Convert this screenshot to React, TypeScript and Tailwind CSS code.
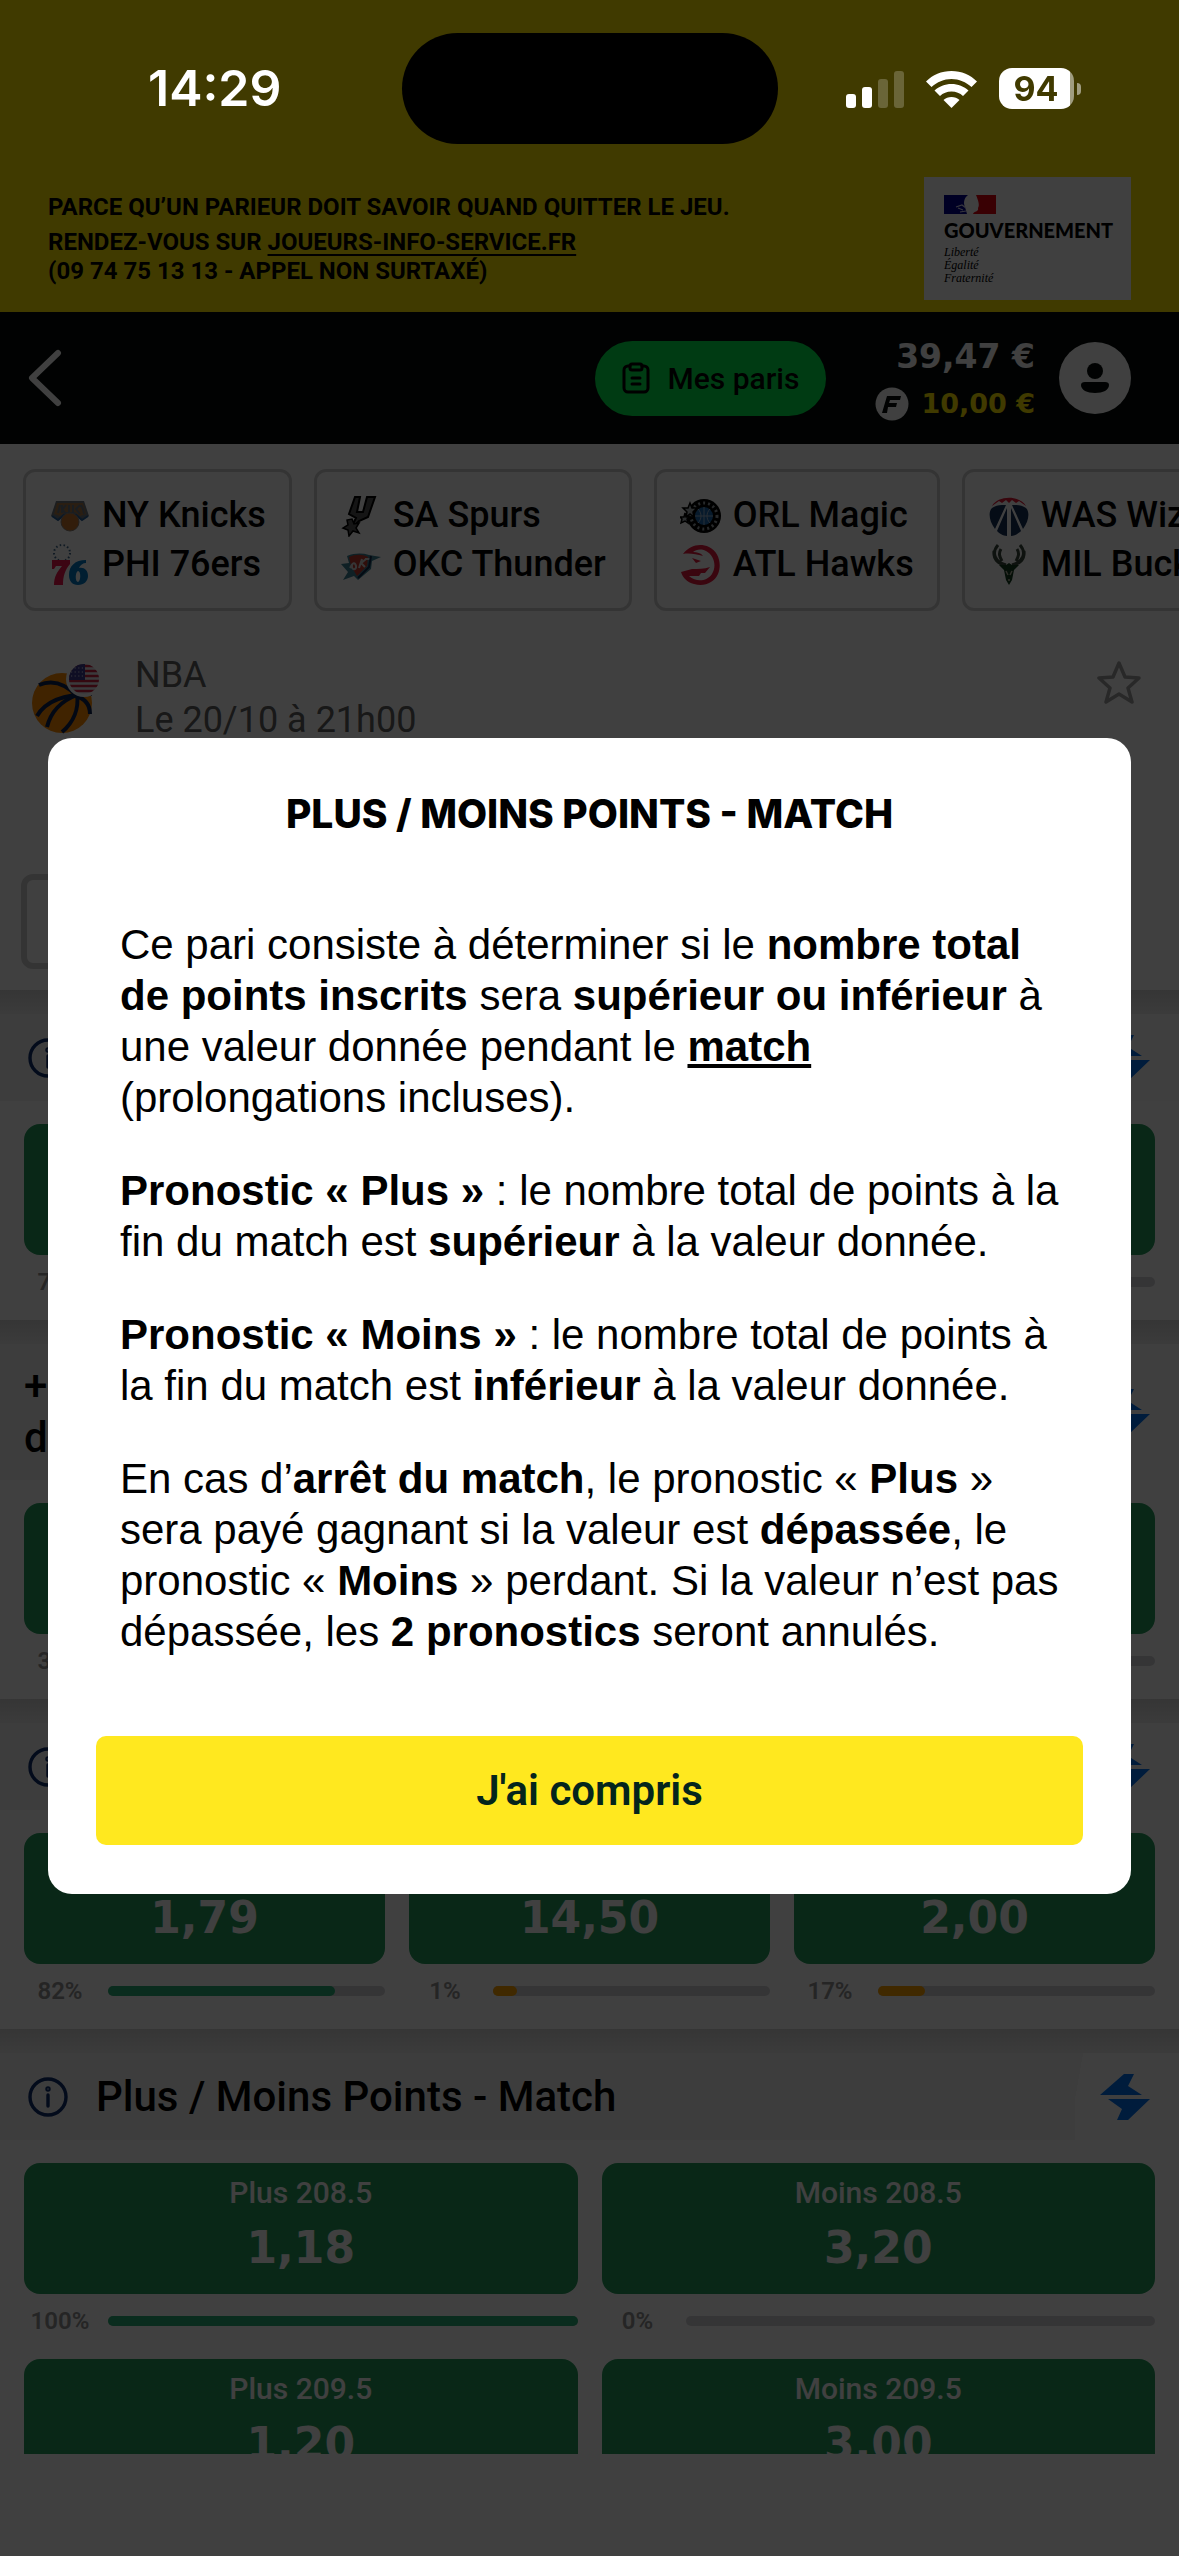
import React, { useState } from 'react';

// --- Types ---
interface Odd {
    label: string;
    value: string;
    percent: number;
}

interface Game {
    home: string;
    away: string;
    homeLogo: React.ReactNode;
    awayLogo: React.ReactNode;
}

// --- Team logos ---
const KnicksLogo = () => (
    <svg viewBox="0 0 42 42" className="size-[42px] shrink-0">
        <path d="M7 6h28l5 15-8 4-5-5H15l-5 5-8-4z" fill="#6f7780" />
        <path d="M8 8h26l3 11-6 2-5-4H16l-5 4-6-2z" fill="#a87848" />
        <path d="M9 18l2-8m2 8V10m0 5l4-5m-4 4l4 5m3 0v-9m4 9v-9m7 0l-4 4 4 5m4 0l-1-5 -2-4" stroke="#6a7380" strokeWidth="2" fill="none" />
        <path d="M3 21l6 4 6-5h12l6 5 6-4" stroke="#2a6098" strokeWidth="2" fill="none" />
        <circle cx="21" cy="27" r="9" fill="#c8742c" stroke="#8a8078" strokeWidth="1" />
    </svg>
);

const SixersLogo = () => (
    <svg viewBox="0 0 42 42" className="size-[42px] shrink-0">
        <circle cx="13" cy="9" r="8" fill="none" stroke="#40688c" strokeWidth="2" strokeDasharray="1.5 2.4" />
        <path d="M3 16h18v4c-5 6-7 12-7 21H5c0-8 3-13 8-19H7l-2 3H3z" fill="#ed174c" />
        <path d="M37 16c-11 0-17 6-17 15 0 6 3 10 9 10s10-4 10-9c0-6-4-9-9-8 1-3 4-5 7-5zM29 27c3 0 3 10 0 11-3 0-3-10 0-11z" fill="#0079c4" fillRule="evenodd" />
    </svg>
);

const SpursLogo = () => (
    <svg viewBox="0 0 42 42" className="size-[42px] shrink-0">
        <path d="M15 2l5 0-3 15 6 0 4-15 8 0-7 20-9 4-4 4-2-1 3-6-7-4z" fill="#555" stroke="#000" strokeWidth="2" />
        <path d="M12 24l2 5 5-1-3 5 3 5-6-2-4 5-1-6-5-2 5-3-1-5z" fill="#555" stroke="#000" strokeWidth="1.5" />
    </svg>
);

const ThunderLogo = () => (
    <svg viewBox="0 0 42 42" className="size-[42px] shrink-0">
        <path d="M1 20l8-1-2-7c8-3 15-3 22-1l12 2-9 4-1 8-13 11-4-4-11 4 5-8z" fill="#3c7f92" />
        <path d="M9 13c7-3 13-3 19 0l-1 9-10 10-6-10z" fill="#c03a2c" />
        <path d="M10 24c3-6 5-6 6-2s-5 5-4-1m7 3l3-9m-2 5l6-5m-5 4l4 4m0-8h6" stroke="#d8d8d8" strokeWidth="2" fill="none" />
        <path d="M31 12l-2 11-11 11" stroke="#12294c" strokeWidth="2" fill="none" />
    </svg>
);

const MagicLogo = () => (
    <svg viewBox="0 0 42 42" className="size-[42px] shrink-0">
        <circle cx="24" cy="21" r="17" fill="#000" />
        <circle cx="24" cy="21" r="13" fill="none" stroke="#9aa2a8" strokeWidth="3" strokeDasharray="2 3" />
        <circle cx="24" cy="21" r="9" fill="#1d6ab0" />
        <path d="M15 21h18M24 12v18M18 14c4 4 4 10 0 14M30 14c-4 4-4 10 0 14" stroke="#a0b4cc" strokeWidth="1" fill="none" />
        <path d="M10 8l2 5 5 0-4 4 1 5-4-3-4 3 1-5-4-4h5z" fill="#aab2b8" stroke="#000" strokeWidth="1.5" />
        <path d="M5 18l1 4h4l-3 2 1 4-3-2-4 2 1-4-2-2h4z" fill="#aab2b8" stroke="#000" strokeWidth="1.5" />
    </svg>
);

const HawksLogo = () => (
    <svg viewBox="0 0 42 42" className="size-[42px] shrink-0">
        <path
            d="M3 10C10 1 20-1 29 3c10 5 13 17 9 27C34 39 24 43 14 40 7 38 3 34 1 28l11-3c6 0 12 0 18-2l-5 6-4 0-2 3-10 0c8 7 18 5 23-2 5-8 2-19-6-23-6-3-10-1-13 1 4 0 8 1 10 4C16 10 9 9 3 10z"
            fill="#e8193c"
        />
        <path d="M12 14l9 3-5 2z" fill="#e8193c" />
    </svg>
);

const WizardsLogo = () => (
    <svg viewBox="0 0 42 42" className="size-[42px] shrink-0">
        <path d="M4 11C10 0 32 0 38 11l-7-5-3 2-4-3-3 3-3-3-4 3-3-2z" fill="#e31837" />
        <path d="M14 10l4 0-11 24C1 26 0 17 4 13c3-2 6-3 10-3zM28 10l-4 0 11 24c6-8 7-17 3-21-3-2-6-3-10-3z" fill="#143058" />
        <path d="M19 13v28c-4 0-8-3-10-5zM23 13v28c4 0 8-3 10-5z" fill="#143058" />
    </svg>
);

const BucksLogo = () => (
    <svg viewBox="0 0 42 42" className="size-[42px] shrink-0">
        <path d="M10 1C3 9 7 18 18 21M6 7c-1 8 4 13 12 14M13 5c-3 5-1 8 1 12M32 1c7 8 3 17-8 20M36 7c1 8-4 13-12 14M29 5c3 5 1 8-1 12" stroke="#3a4a3c" strokeWidth="3" fill="none" />
        <path d="M11 21l7 0 3-2 3 2 7 0-5 5-2 10-3 5-3-5-2-10z" fill="#123c1e" />
        <path d="M18 27l2 4m4-4l-2 4m-2 5h2" stroke="#b8b4a0" strokeWidth="1.5" />
    </svg>
);

// --- Icons ---
const BasketballIcon = () => (
    <svg viewBox="0 0 72 72" className="size-[72px] shrink-0">
        <circle cx="32" cy="41" r="30" fill="#ff8a00" />
        <g stroke="#0b2150" strokeWidth="4" fill="none">
            <path d="M9 23c14-6 27-1 39 12" />
            <path d="M7 54c8-14 24-22 55-22" />
            <path d="M17 65c4-16 14-26 30-32" />
            <path d="M32 70c12-10 17-24 15-38" />
            <path d="M46 34c10 3 14 10 14 18" />
        </g>
        <circle cx="54" cy="17" r="18" fill="#fff" />
        <clipPath id="flag">
            <circle cx="54" cy="17" r="15" />
        </clipPath>
        <g clipPath="url(#flag)">
            <rect x="39" y="2" width="30" height="30" fill="#e8e8f0" />
            <path d="M39 4h30M39 9h30M39 14h30M39 19h30M39 24h30M39 29h30" stroke="#d02040" strokeWidth="2.6" />
            <rect x="39" y="2" width="16" height="16" fill="#3c3b8e" />
            <path d="M41 6h13M41 10h13M41 14h13" stroke="#d8d8f0" strokeWidth="1.2" strokeDasharray="1.2 2.4" />
        </g>
    </svg>
);

const InfoIcon = () => (
    <svg viewBox="0 0 40 40" className="size-10 shrink-0" fill="none" stroke="#0c2c6c" strokeWidth="3.4">
        <circle cx="20" cy="20" r="18" />
        <path d="M20 18v11" strokeLinecap="round" />
        <circle cx="20" cy="12" r="1" />
    </svg>
);

const BoltIcon = () => (
    <svg viewBox="0 0 50 46" className="h-[46px] w-[50px]" fill="#0070f0">
        <path d="M24 0h10l-6 12 14 9H0z" />
        <path d="M8 25h42L28 46H17l5-11z" />
    </svg>
);

const StatusBar = () => (
    <div className="fixed inset-x-0 top-0 z-30 grid h-[177px] grid-cols-[1fr_376px_1fr] pt-[33px] text-white">
        <div className="flex h-[111px] items-center justify-center pl-7 font-[Inter] text-[50px] font-semibold">14:29</div>
        <div className="h-[111px] rounded-full bg-black" />
        <div className="flex h-[111px] items-center gap-[22px] pl-[68px]">
            <svg viewBox="0 0 58 38" className="h-[38px] w-[58px]" fill="#fff">
                <rect x="0" y="24" width="10" height="14" rx="3" />
                <rect x="16" y="17" width="10" height="21" rx="3" />
                <rect x="32" y="9" width="10" height="29" rx="3" opacity=".22" />
                <rect x="48" y="1" width="10" height="37" rx="3" opacity=".22" />
            </svg>
            <svg viewBox="0 0 51 38" className="h-[38px] w-[51px]" fill="#fff">
                <path d="M25.500 1C15.500 1 6.500 5 0 11.500l5.500 5.500C11 12 18 9 25.500 9S40 12 45.500 17l5.500-5.500C44.500 5 35.500 1 25.500 1z" />
                <path d="M25.500 14c-6.500 0-12.500 2.500-17 6.500l5.500 5.500c3-3 7-4.500 11.500-4.500S34 23 37 26l5.500-5.500c-4.500-4-10.500-6.500-17-6.500z" />
                <path d="M25.500 27c-3 0-6 1-8 3l8 8 8-8c-2-2-5-3-8-3z" />
            </svg>
            <div className="flex items-center gap-[3px]">
                <div className="flex h-[41px] w-[75px] items-center justify-center rounded-[13px] bg-[linear-gradient(90deg,#fff_94%,#a09d80_94%)] font-[Inter] text-[34px] font-bold text-[#403a00]">
                    94
                </div>
                <div className="h-3 w-1 rounded-r-full bg-[#a09d80]" />
            </div>
        </div>
    </div>
);

// --- Page parts ---
const GamblingBanner = () => (
    <div className="flex items-start justify-between bg-[#ffe600] px-12 pt-[177px] pb-3 text-black">
        <div className="pt-4 font-[Roboto] text-2xl leading-[29px] font-bold">
            <p className="mb-[6px]">PARCE QU’UN PARIEUR DOIT SAVOIR QUAND QUITTER LE JEU.</p>
            <p>
                RENDEZ-VOUS SUR{' '}
                <a href="#joueurs" className="underline underline-offset-4">JOUEURS-INFO-SERVICE.FR</a>
            </p>
            <p>(09 74 75 13 13 - APPEL NON SURTAXÉ)</p>
        </div>
        <div className="h-[123px] w-[207px] bg-white pt-[18px] pl-5">
            <svg viewBox="0 0 52 19" className="h-[19px] w-[52px]">
                <path d="M0 0h24c-4 3-5 8-3 12l2 7H0z" fill="#000091" />
                <path d="M32 0h20v19H29c1-3 6-2 5-6 2-3 0-8-2-13z" fill="#e1000f" />
                <path d="M12 12l6-2 4 3m-8 0l5 2m-3 2l6-1" stroke="#d8d8f0" strokeWidth="1.2" fill="none" />
            </svg>
            <p className="mt-1 font-[Lato] text-xl leading-6 font-black">GOUVERNEMENT</p>
            <p className="mt-1 font-['Liberation_Serif'] text-xs leading-[13px] italic">
                Liberté
                <br />
                Égalité
                <br />
                Fraternité
            </p>
        </div>
    </div>
);

const Header = () => (
    <header className="flex h-[132px] shrink-0 items-center bg-[#040a08] pr-12 pl-7">
        <button type="button" aria-label="Retour">
            <svg viewBox="0 0 34 58" className="h-[58px] w-[34px]" fill="none" stroke="#fff" strokeWidth="6" strokeLinecap="round" strokeLinejoin="round">
                <path d="M30 4L4 29l26 25" />
            </svg>
        </button>
        <button type="button" className="ml-auto flex h-[75px] w-[231px] items-center justify-center gap-[18px] rounded-full bg-[#00ec4c] font-[Roboto] text-[30px] font-medium text-black">
            <svg viewBox="0 0 28 32" className="h-8 w-7" fill="none" stroke="#000" strokeWidth="3" strokeLinecap="round" strokeLinejoin="round">
                <path d="M8 4H6a4 4 0 0 0-4 4v18a4 4 0 0 0 4 4h16a4 4 0 0 0 4-4V8a4 4 0 0 0-4-4h-2" />
                <rect x="8" y="2" width="12" height="6" rx="2" />
                <path d="M10 16h8M10 22h8" />
            </svg>
            Mes paris
        </button>
        <div className="ml-12 flex w-[161px] flex-col items-end gap-[5px] pt-1 font-['DejaVu_Sans'] font-bold whitespace-nowrap">
            <span className="text-[33px] leading-[42px] text-white">39,47 €</span>
            <span className="flex items-center gap-3 text-[27px] leading-[42px] text-[#ffe600]">
                <svg viewBox="0 0 34 34" className="size-[34px]">
                    <circle cx="17" cy="17" r="16.500" fill="#fff" />
                    <path d="M12 9h14l-1 4H15l-1 3h8l-1 4h-8l-1 6H7z" fill="#040a08" />
                </svg>
                10,00 €
            </span>
        </div>
        <button type="button" aria-label="Mon compte" className="ml-6 size-[72px] rounded-full bg-white">
            <svg viewBox="0 0 72 72" className="size-[72px]" fill="#040a08">
                <circle cx="36" cy="29" r="8" />
                <path d="M26 40h20q4 0 4 3c0 5-6 8-14 8s-14-3-14-8q0-3 4-3z" />
            </svg>
        </button>
    </header>
);

const GAMES: Game[] = [
    { home: 'NY Knicks', away: 'PHI 76ers', homeLogo: <KnicksLogo />, awayLogo: <SixersLogo /> },
    { home: 'SA Spurs', away: 'OKC Thunder', homeLogo: <SpursLogo />, awayLogo: <ThunderLogo /> },
    { home: 'ORL Magic', away: 'ATL Hawks', homeLogo: <MagicLogo />, awayLogo: <HawksLogo /> },
    { home: 'WAS Wizards', away: 'MIL Bucks', homeLogo: <WizardsLogo />, awayLogo: <BucksLogo /> },
];

const GameTabs = () => (
    <nav className="flex gap-[22px] overflow-hidden px-[23px] pt-[25px]">
        {GAMES.map(game => (
            <button
                key={game.home}
                type="button"
                className="flex h-[142px] shrink-0 flex-col justify-center rounded-xl border-3 border-[#cfcfcf] px-[23px] font-[Roboto] text-4xl leading-[49px] font-medium text-black"
            >
                <span className="flex items-center gap-[11px]">{game.homeLogo}{game.home}</span>
                <span className="flex items-center gap-[11px]">{game.awayLogo}{game.away}</span>
            </button>
        ))}
    </nav>
);

const EventCard = () => (
    <section className="pb-[21px]">
        <div className="flex pt-[42px] pr-[38px] pl-[30px]">
            <div className="pt-[9px]">
                <BasketballIcon />
            </div>
            <div className="ml-[33px] flex-1 font-[Roboto] text-4xl leading-[45px] text-[#606060]">
                <p>NBA</p>
                <p>Le 20/10 à 21h00</p>
            </div>
            <button type="button" aria-label="Favori" className="h-[60px]">
                <svg viewBox="0 0 44 44" className="size-11" fill="none" stroke="#a0a0a0" strokeWidth="3.500" strokeLinejoin="round">
                    <path d="M22 2l6 14 14 1-11 10 4 14-13-8-13 8 4-14L2 17l14-1z" />
                </svg>
            </button>
        </div>
        <div className="mx-[21px] mt-[131px] h-[95px] w-1/2 rounded-xl border-6 border-[#cfcfcf]" />
    </section>
);

const OddButton = ({ odd }: { odd: Odd }) => (
    <div>
        <button type="button" className="flex h-[131px] w-full flex-col items-center rounded-2xl bg-[#249c5c] pt-3 text-white">
            <span className="font-[Roboto] text-[30px] leading-9 font-medium">{odd.label}</span>
            <span className="mt-1 font-['DejaVu_Sans'] text-[44px] leading-[66px] font-bold">{odd.value}</span>
        </button>
        <div className="flex h-[65px] items-start pt-[13px]">
            <span className="mr-3 w-[72px] text-center font-[Roboto] text-2xl leading-7 font-semibold text-[#949494]">{odd.percent}%</span>
            <div className="mt-[9px] h-[10px] flex-1 rounded-full bg-[#d4d4d8]">
                {odd.percent > 0 && (
                    <div
                        className={`h-full min-w-6 rounded-full ${odd.percent > 50 ? 'bg-[#28b078]' : 'bg-[#ffa400]'}`}
                        style={{ width: `${odd.percent}%` }}
                    />
                )}
            </div>
        </div>
    </div>
);

const Market = ({ title, info = true, columns = 2, odds }: { title: string; info?: boolean; columns?: 2 | 3; odds: Odd[] }) => (
    <section>
        <div className="h-6 bg-linear-to-b from-[#d4d4d4] to-[#ececec]" />
        <div className="flex items-stretch bg-[#f2f2f2]">
            <div className="flex flex-1 items-center gap-7 py-4 pl-7">
                {info && <InfoIcon />}
                <h2 className={`font-[Roboto] text-[42px] font-medium text-black ${info ? 'leading-[55px]' : '-ml-1 max-w-[440px] leading-[52px]'}`}>{title}</h2>
            </div>
            <div className="flex w-[104px] items-center justify-end bg-[linear-gradient(100deg,#f2f2f2_8px,#fafafa_8px)] pr-[29px]">
                <BoltIcon />
            </div>
        </div>
        <div className={`grid gap-x-6 px-6 pt-[23px] ${columns === 3 ? 'grid-cols-3' : 'grid-cols-2'}`}>
            {odds.map(odd => <OddButton key={odd.label} odd={odd} />)}
        </div>
    </section>
);

// --- Rules dialog ---
const RulesDialog = ({ onClose }: { onClose: () => void }) => (
    <div className="fixed inset-0 z-20 flex items-center justify-center bg-black/75 px-12 pt-[76px]">
        <div role="dialog" aria-modal="true" aria-labelledby="rules-title" className="w-full rounded-3xl bg-white px-12 pt-[52px] pb-[49px] text-black">
            <h1 id="rules-title" className="text-center font-[Inter] text-[39px] leading-[48px] font-extrabold">PLUS / MOINS POINTS - MATCH</h1>
            <div className="mt-[81px] mb-[79px] space-y-[42px] px-6 font-['Liberation_Sans'] text-[42px] leading-[51px]">
                <p>
                    Ce pari consiste à déterminer si le <b>nombre total de points inscrits</b> sera <b>supérieur ou inférieur</b> à
                    une valeur donnée pendant le <b className="underline">match</b> (prolongations incluses).
                </p>
                <p>
                    <b>Pronostic « Plus »</b> : le nombre total de points à la fin du match est <b>supérieur</b> à la valeur donnée.
                </p>
                <p>
                    <b>Pronostic « Moins »</b> : le nombre total de points à la fin du match est <b>inférieur</b> à la valeur donnée.
                </p>
                <p>
                    En cas d’<b>arrêt du match</b>, le pronostic « <b>Plus</b> » sera payé gagnant si la valeur est <b>dépassée</b>, le
                    pronostic « <b>Moins</b> » perdant. Si la valeur n’est pas dépassée, les <b>2 pronostics</b> seront annulés.
                </p>
            </div>
            <button type="button" onClick={onClose} className="h-[109px] w-full rounded-[10px] bg-[#ffe81f] font-[Roboto] text-[42px] font-semibold text-[#04251c]">
                J'ai compris
            </button>
        </div>
    </div>
);

export default function App() {
    const [showRules, setShowRules] = useState(true);

    return (
        <div className="flex h-screen flex-col overflow-hidden bg-white">
            <StatusBar />
            <GamblingBanner />
            <Header />
            <main className="min-h-0 flex-1 overflow-hidden">
                <GameTabs />
                <EventCard />
                <Market
                    title="Vainqueur"
                    odds={[
                        { label: 'NY Knicks', value: '1,35', percent: 79 },
                        { label: 'PHI 76ers', value: '2,60', percent: 21 },
                    ]}
                />
                <Market
                    title="+ de points inscrits durant le match"
                    info={false}
                    odds={[
                        { label: 'Oui', value: '1,85', percent: 36 },
                        { label: 'Non', value: '1,75', percent: 64 },
                    ]}
                />
                <Market
                    title="Résultat"
                    columns={3}
                    odds={[
                        { label: '1', value: '1,79', percent: 82 },
                        { label: 'N', value: '14,50', percent: 1 },
                        { label: '2', value: '2,00', percent: 17 },
                    ]}
                />
                <Market
                    title="Plus / Moins Points - Match"
                    odds={[
                        { label: 'Plus 208.5', value: '1,18', percent: 100 },
                        { label: 'Moins 208.5', value: '3,20', percent: 0 },
                        { label: 'Plus 209.5', value: '1,20', percent: 100 },
                        { label: 'Moins 209.5', value: '3,00', percent: 0 },
                    ]}
                />
            </main>
            <footer className="h-[102px] shrink-0 bg-white" />
            {showRules && <RulesDialog onClose={() => setShowRules(false)} />}
        </div>
    );
}
